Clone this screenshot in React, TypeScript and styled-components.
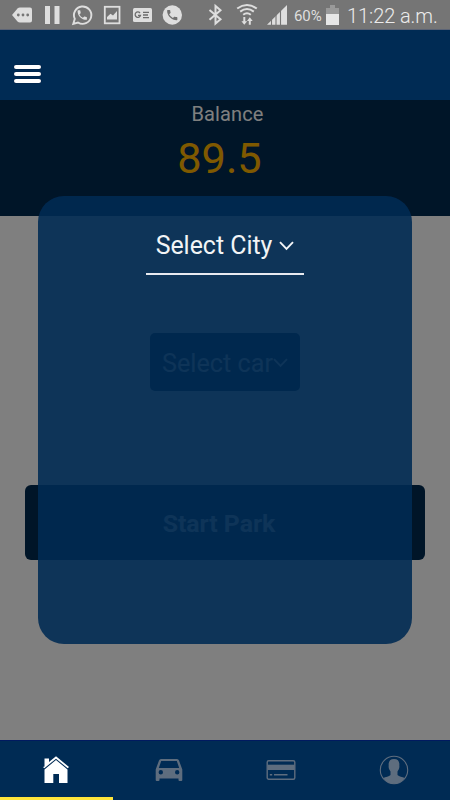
import React from "react";
import styled, { createGlobalStyle } from "styled-components";

const Global = createGlobalStyle`
  * { box-sizing: border-box; }
  body { margin: 0; font-family: Roboto, "Liberation Sans", sans-serif; background: #808080; }
  button { font: inherit; border: 0; padding: 0; margin: 0; }
`;

const Screen = styled.div`
  width: 450px;
  height: 800px;
  display: flex;
  flex-direction: column;
  overflow: hidden;
`;

const StatusBar = styled.div`
  height: 30px;
  flex: none;
  display: flex;
  justify-content: space-between;
  background: #757575;
  border-bottom: 1px solid #5c6476;
  color: #dedede;
  padding-right: 12px;
`;

const StatusGlyphs = styled.svg`
  display: block;
  width: 290px;
  height: 29px;
  flex: none;
`;

const StatusInfo = styled.div`
  flex: 1;
  display: flex;
  align-items: center;
  padding: 2px 0 0 4px;
`;

const Percent = styled.span`
  font-size: 15px;
  width: 32px;
  letter-spacing: -0.1px;
`;

const Battery = styled.svg`
  width: 13px;
  height: 20px;
  margin: -2px 8px 0 0;
`;

const Clock = styled.span`
  font-size: 20px;
  font-weight: 300;
  letter-spacing: -0.08px;
  white-space: nowrap;
  color: #ececec;
`;

const Header = styled.header`
  height: 70px;
  flex: none;
  background: #002b54;
  padding: 34px 0 0 13px;
`;

const MenuButton = styled.button`
  display: flex;
  flex-direction: column;
  gap: 3px;
  width: 29px;
  padding: 1px;
  background: none;
`;

const MenuLine = styled.span`
  height: 4px;
  border-radius: 2px;
  background: #fff;
  box-shadow: 0 0 1px #000c28;
`;

const Content = styled.main`
  position: relative;
  height: 640px;
  flex: none;
  display: flex;
  flex-direction: column;
  align-items: center;
  background: #fff;
`;

const BalancePanel = styled.section`
  width: 100%;
  height: 116px;
  background: #002a50;
  color: #fff;
  text-align: center;
  padding-top: 3px;
`;

const BalanceLabel = styled.div`
  font-size: 20px;
  line-height: 23px;
  letter-spacing: 0.1px;
  padding-left: 5px;
`;

const BalanceValue = styled.div`
  font-size: 43.3px;
  line-height: 50px;
  margin-top: 8px;
  padding-right: 11px;
  color: #ffb300;
`;

const CarSelect = styled.button`
  display: flex;
  align-items: center;
  justify-content: center;
  width: 150px;
  height: 58px;
  margin-top: 117px;
  padding-top: 2px;
  border-radius: 5px;
  background: #002a50;
  color: #fff;
  font-size: 25.2px;
`;

const StartButton = styled.button`
  width: 400px;
  height: 75px;
  margin-top: 94px;
  padding: 1px 12px 0 0;
  border-radius: 6px;
  background: #002a50;
  color: #fff;
  font-size: 24.8px;
  font-weight: 700;
`;

const Backdrop = styled.div`
  position: absolute;
  inset: 0;
  display: flex;
  align-items: center;
  justify-content: center;
  background: rgba(0, 0, 0, 0.5);
`;

const Dialog = styled.div`
  width: 374px;
  height: 448px;
  border-radius: 26px;
  background: rgba(0, 43, 83, 0.89);
  display: flex;
  flex-direction: column;
  align-items: center;
  padding-top: 30px;
`;

const CitySelect = styled.button`
  width: 158px;
  height: 49px;
  display: flex;
  align-items: flex-start;
  justify-content: center;
  gap: 7px;
  background: none;
  color: #f2f4f6;
  font-size: 24.9px;
  line-height: 39px;
  border-bottom: 2px solid #e8eaf0;
`;

const Chevron = styled.svg<{ $top?: number }>`
  width: 15px;
  height: 10px;
  flex: none;
  margin-top: ${(p) => p.$top ?? 0}px;
  fill: none;
  stroke: currentColor;
  stroke-width: 1.9;
`;

const TabBar = styled.nav`
  height: 60px;
  flex: none;
  display: grid;
  grid-template-columns: repeat(4, 1fr);
  background: #002b54;
  border-top: 1px solid #001a60;
`;

const Tab = styled.button<{ $active?: boolean }>`
  display: flex;
  align-items: center;
  justify-content: center;
  background: none;
  color: ${(p) => (p.$active ? "#fff" : "#5e6d7e")};
  border-bottom: 3px solid ${(p) => (p.$active ? "#ffe53b" : "transparent")};
  padding-top: 1px;
`;

const TabIcon = styled.svg`
  width: 30px;
  height: 30px;
  overflow: visible;
`;

const PHONE =
  "M6.6 10.8a15 15 0 0 0 6.6 6.6l2.2-2.2c.3-.3.7-.4 1-.2 1.1.4 2.3.6 3.6.6.6 0 1 .4 1 1V20c0 .6-.4 1-1 1C10.6 21 3 13.4 3 4c0-.6.4-1 1-1h3.5c.6 0 1 .4 1 1 0 1.3.2 2.5.6 3.6.1.3 0 .7-.2 1z";

const StatusIcons = () => (
  <StatusGlyphs viewBox="0 0 290 29" fill="#dedede">
    <path d="M12 15 L17.5 8.5 Q18.5 7.5 20 7.5 H30 Q32 7.5 32 9.5 V20.5 Q32 22.5 30 22.5 H20 Q18.5 22.5 17.5 21.5Z" />
    <g fill="#757575">
      <circle cx="18.3" cy="15" r="1.4" />
      <circle cx="23" cy="15" r="1.4" />
      <circle cx="27.7" cy="15" r="1.4" />
    </g>
    <rect x="45" y="6" width="5" height="18" />
    <rect x="54.500" y="6" width="5" height="18" />
    <path d="M73.3 23.8 L74.8 18.9 A8.7 8.7 0 1 1 78 22.5 Z" fill="none" stroke="#dedede" strokeWidth="1.9" />
    <path d={PHONE} transform="translate(76 8.8) scale(.52)" />
    <rect x="104.8" y="6.8" width="14.7" height="16.5" fill="none" stroke="#dedede" strokeWidth="1.8" />
    <path d="M107 19.5 V17 L110.5 13.8 L113 15.5 L117 11 V19.5Z" />
    <rect x="133" y="8" width="19" height="14" rx="1.5" />
    <path d="M140 13 A2.7 2.7 0 1 0 140.5 15.3 H138 M143 12.3 H149 M143 15 H148 M143 17.7 H149" fill="none" stroke="#6c6c6c" strokeWidth="1.3" />
    <circle cx="172.3" cy="15" r="9.7" />
    <path d={PHONE} transform="translate(165.4 8.2) scale(.57)" fill="#707070" />
    <path d="M209.5 10 L220.5 19.2 L215.5 23.5 V6 L220.5 10.3 L209.5 19.7" fill="none" stroke="#dedede" strokeWidth="2" />
    <g fill="none" stroke="#dedede" strokeWidth="2">
      <path d="M237.2 8.5 Q247 1.5 256.8 8.5" />
      <path d="M240.2 11.6 Q247 6.6 253.8 11.6" />
      <path d="M243.2 14.7 Q247 11.7 250.8 14.7" />
    </g>
    <path d="M243.3 17 H245.3 V21.2 H247.2 L244.3 24.8 L241.4 21.2 H243.3Z M248.8 24.8 V21 H247 L249.8 17.2 L252.7 21 H250.8 V24.8Z" />
    <path d="M267 24.8 L287 5 V24.8Z" />
    <path d="M271.5 18 V25 M276 14 V25 M280.5 10 V25" stroke="#757575" strokeWidth="1.1" />
  </StatusGlyphs>
);

const Down = ({ top }: { top?: number }) => (
  <Chevron $top={top} viewBox="0 0 15 10">
    <path d="M1 1.2 L7.5 7.9 L14 1.2" />
  </Chevron>
);

export default function App() {
  return (
    <Screen>
      <Global />
      <StatusBar>
        <StatusIcons />
        <StatusInfo>
          <Percent>60%</Percent>
          <Battery viewBox="0 0 13 20">
            <path d="M0 3 H4 V0 H9 V3 H13 V20 H0Z" fill="#999" />
            <path d="M0 9 H13 V20 H0Z" fill="#e6e6e6" />
          </Battery>
          <Clock>11:22 a.m.</Clock>
        </StatusInfo>
      </StatusBar>
      <Header>
        <MenuButton aria-label="Menu">
          <MenuLine />
          <MenuLine />
          <MenuLine />
        </MenuButton>
      </Header>
      <Content>
        <BalancePanel>
          <BalanceLabel>Balance</BalanceLabel>
          <BalanceValue>89.5</BalanceValue>
        </BalancePanel>
        <CarSelect>
          Select car
          <Down />
        </CarSelect>
        <StartButton>Start Park</StartButton>
        <Backdrop>
          <Dialog>
            <CitySelect>
              Select City
              <Down top={15} />
            </CitySelect>
          </Dialog>
        </Backdrop>
      </Content>
      <TabBar>
        <Tab $active aria-label="Home">
          <TabIcon viewBox="0 0 30 30" fill="currentColor">
            <path d="M3.5 11.5 V3.5 H8 V7 L15 1.3 L28 12 L26.7 13.3 L15 3.7 L3.3 13.3 L2 12Z" />
            <path d="M15 5 L26.5 14.5 V28 H18 V19 H12.3 V28 H3.5 V14.5Z" />
          </TabIcon>
        </Tab>
        <Tab aria-label="Car">
          <TabIcon viewBox="0 0 30 30" fill="currentColor">
            <path
              fillRule="evenodd"
              d="M5 5.5 Q5.500 4 7 4 H23 Q24.500 4 25 5.5 L28.3 14.5 V25 Q28.3 26 27.3 26 H25.5 Q24.5 26 24.5 25 V23.5 H5.5 V25 Q5.5 26 4.5 26 H2.7 Q1.7 26 1.7 25 V14.5Z M7.2 6 L4.8 13 H25.2 L22.8 6Z M9 17.3 A2.2 2.2 0 1 0 4.6 17.3 A2.2 2.2 0 1 0 9 17.3Z M25.4 17.3 A2.2 2.2 0 1 0 21 17.3 A2.2 2.2 0 1 0 25.4 17.3Z"
            />
          </TabIcon>
        </Tab>
        <Tab aria-label="Card">
          <TabIcon viewBox="0 0 30 30" fill="currentColor">
            <rect x="1.2" y="5.7" width="27.6" height="18.6" rx="1.5" fill="none" stroke="currentColor" strokeWidth="1.4" />
            <rect x="1.5" y="9.7" width="27" height="5.3" />
            <path d="M3.8 19.7 H6.2 M8 19.7 H21.5" stroke="currentColor" strokeWidth="1.5" />
          </TabIcon>
        </Tab>
        <Tab aria-label="Profile">
          <TabIcon viewBox="0 0 30 30" fill="currentColor">
            <circle cx="15" cy="15" r="13.7" fill="none" stroke="currentColor" strokeWidth="1.1" />
            <path d="M15 4 C19 4 20.7 6.5 20.3 10.5 C20.7 13 19.7 15 18.5 16.5 V20 C20 21.8 23.5 22 25.7 23 C23 27 19.5 28.8 15 28.8 S7 27 4.3 23 C6.5 22 10 21.8 11.5 20 V16.5 C10.3 15 9.3 13 9.7 10.5 C9.3 6.5 11 4 15 4Z" />
          </TabIcon>
        </Tab>
      </TabBar>
    </Screen>
  );
}
